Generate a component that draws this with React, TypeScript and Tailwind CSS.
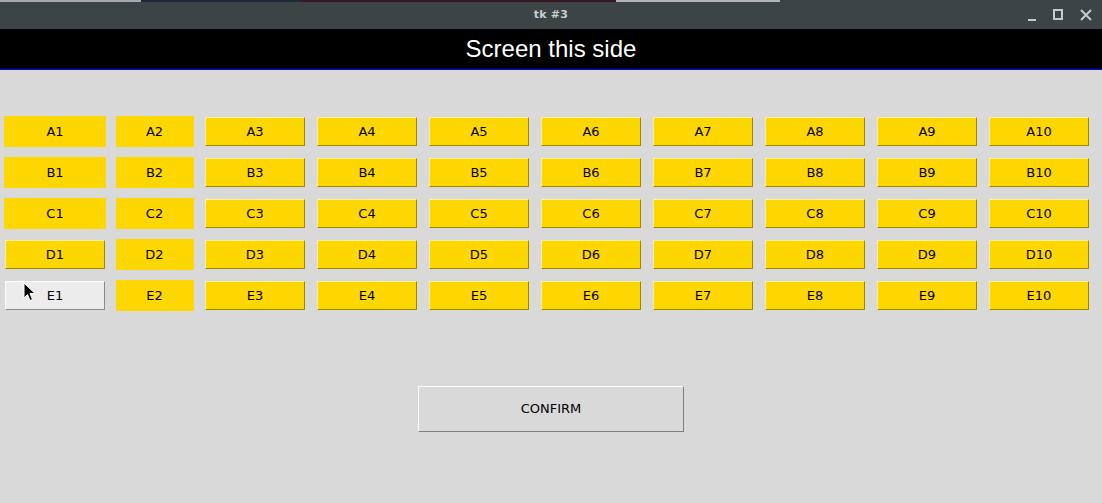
import React from 'react';

const rows = ['A', 'B', 'C', 'D', 'E'];
const colWidths = ['w-[110px]', 'w-[89px]', 'w-[112px]', 'w-[112px]', 'w-[112px]', 'w-[112px]', 'w-[112px]', 'w-[112px]', 'w-[112px]', 'w-[112px]'];

function seatKind(row: string, col: number): 'flat' | 'raised' | 'free' {
  if (col === 2) return 'flat';
  if (col === 1 && (row === 'A' || row === 'B' || row === 'C')) return 'flat';
  if (row === 'E' && col === 1) return 'free';
  return 'raised';
}

function Seat({ label, kind, col }: { label: string; kind: 'flat' | 'raised' | 'free'; col: number }) {
  if (kind === 'flat') {
    return (
      <div className={`${col === 2 ? 'w-[78px]' : 'w-[102px]'} h-[31px] bg-[#ffd700] flex items-center justify-center`}>
        {label}
      </div>
    );
  }
  if (kind === 'free') {
    return (
      <div className="w-[100px] h-[29px] bg-[#ececec] border-t border-l border-t-white border-l-white border-b border-r border-b-[#8a8a8a] border-r-[#8a8a8a] flex items-center justify-center">
        {label}
      </div>
    );
  }
  return (
    <div className="w-[100px] h-[29px] bg-[#ffd700] border-t border-l border-t-[#fff29a] border-l-[#fff29a] border-b border-r border-b-[#a08700] border-r-[#a08700] flex items-center justify-center">
      {label}
    </div>
  );
}

export default function App() {
  return (
    <div className="relative w-[1102px] h-[503px] overflow-hidden bg-[#d9d9d9] flex flex-col font-['DejaVu_Sans',sans-serif] text-[13px] text-black">
      {/* desktop strip behind the window */}
      <div className="h-[2px] flex shrink-0">
        <div className="w-[141px] bg-[#a8a8a8]" />
        <div className="w-[160px] bg-[#1d2a33]" />
        <div className="w-[315px] bg-[#3a1a22]" />
        <div className="w-[164px] bg-[#b4b4b4]" />
        <div className="flex-1 bg-[#3c4446]" />
      </div>

      {/* title bar */}
      <div className="relative h-[27px] shrink-0 bg-[#3c4446] flex items-center justify-center">
        <span className="text-[11px] font-bold text-[#c6cfd1] tracking-[0.2px]">tk #3</span>
        <div className="absolute right-0 top-0 h-full flex items-center">
          <svg width="102" height="27" viewBox="0 0 102 27" className="text-[#c3cbcc]">
            <rect x="28" y="17" width="8" height="2" fill="currentColor" />
            <rect x="54" y="8" width="8" height="9" fill="none" stroke="currentColor" strokeWidth="2" />
            <path d="M81 8 L91 18 M91 8 L81 18" stroke="currentColor" strokeWidth="2" />
          </svg>
        </div>
      </div>

      {/* screen header */}
      <div className="h-[41px] shrink-0 bg-black border-b border-b-[#0000ff] flex items-center justify-center">
        <span className="font-['Liberation_Sans',sans-serif] text-[24px] text-white leading-none">Screen this side</span>
      </div>

      {/* seats */}
      <div className="pt-[41px] flex flex-col">
        {rows.map((row) => (
          <div key={row} className="flex h-[41px]">
            {colWidths.map((w, i) => {
              const col = i + 1;
              return (
                <div key={col} className={`${w} shrink-0 flex items-center justify-center`}>
                  <Seat label={`${row}${col}`} kind={seatKind(row, col)} col={col} />
                </div>
              );
            })}
          </div>
        ))}
      </div>

      {/* confirm */}
      <div className="mt-[70px] flex justify-center">
        <div className="w-[266px] h-[46px] bg-[#d9d9d9] border-t border-l border-t-white border-l-white border-b border-r border-b-[#7f7f7f] border-r-[#7f7f7f] flex items-center justify-center">
          CONFIRM
        </div>
      </div>

      {/* mouse pointer */}
      <svg className="absolute left-[23px] top-[282px]" width="14" height="20" viewBox="0 0 14 20">
        <path d="M1 1 L1 16 L4.5 12.5 L7 18.5 L9.5 17.5 L7 11.5 L12 11.5 Z" fill="#000" stroke="#fff" strokeWidth="1" strokeLinejoin="round" />
      </svg>
    </div>
  );
}
